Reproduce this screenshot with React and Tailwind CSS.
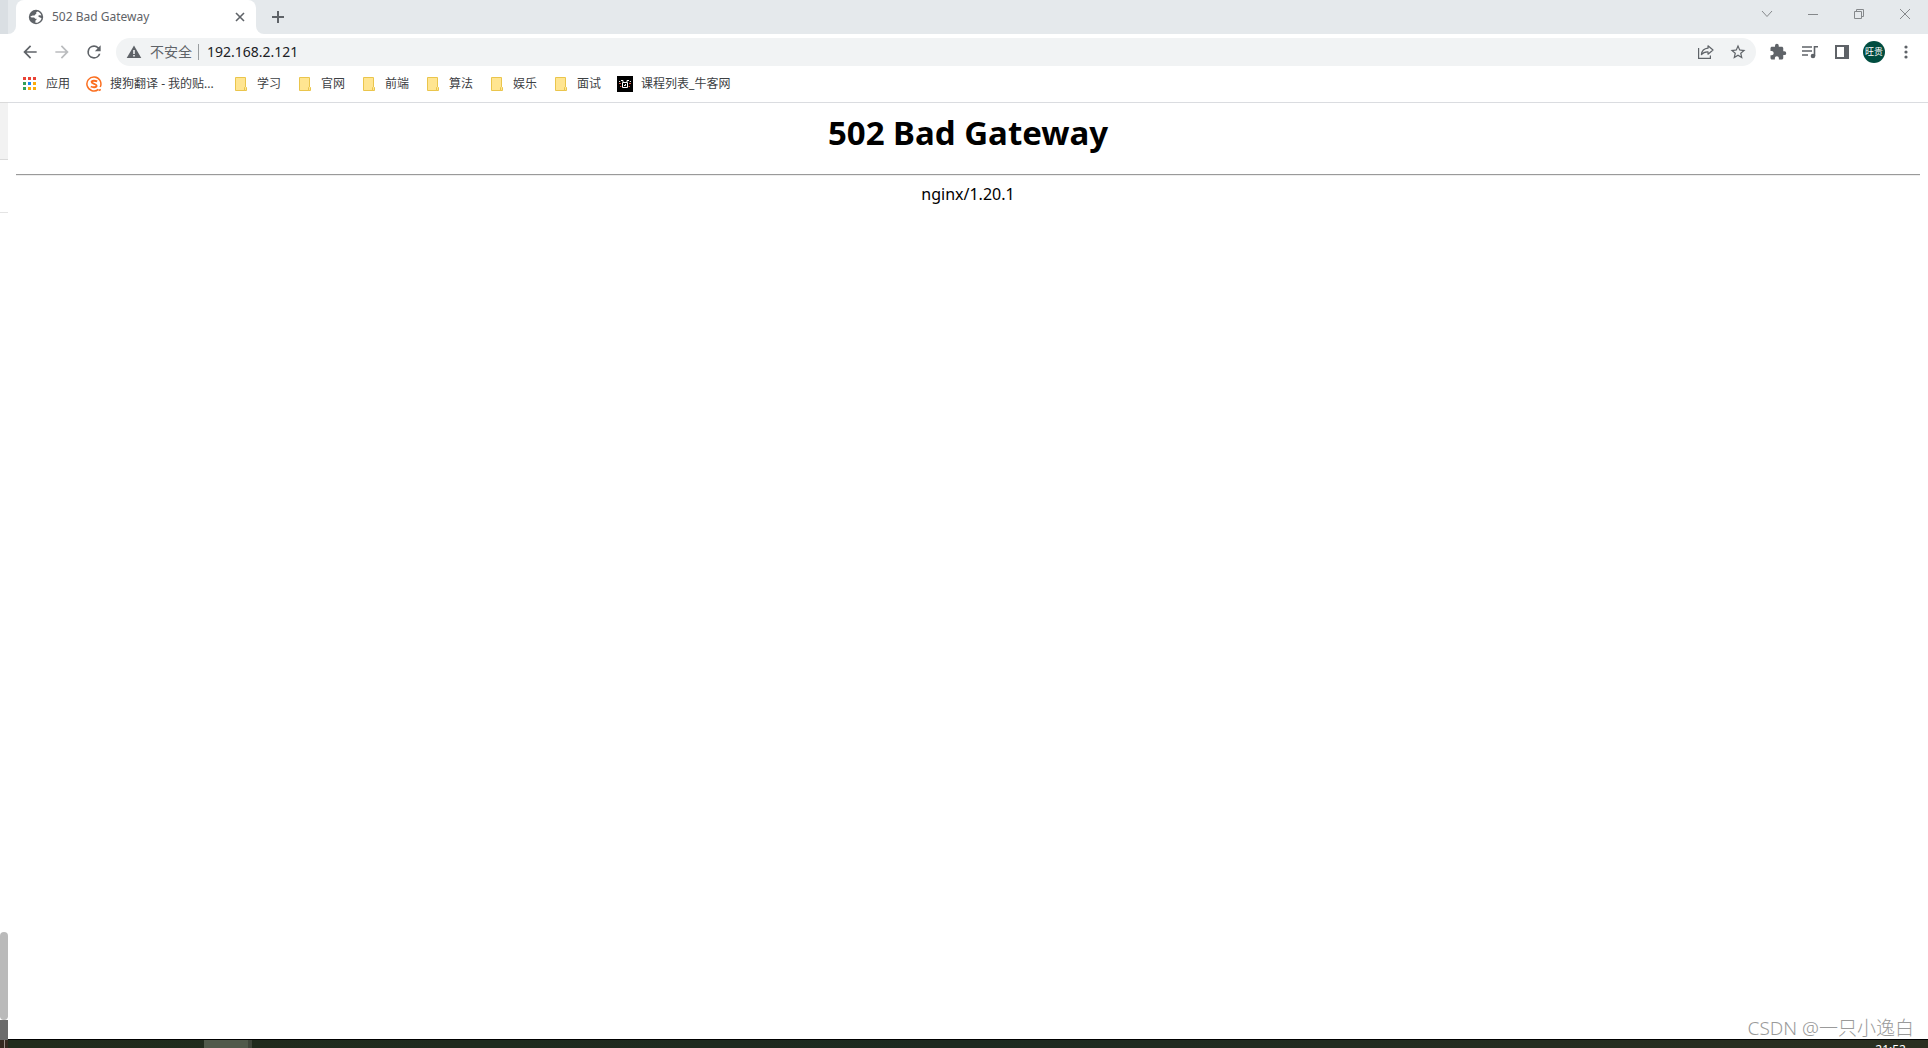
const bookmarks = [
  { label: "学习", icon: "folder" },
  { label: "官网", icon: "folder" },
  { label: "前端", icon: "folder" },
  { label: "算法", icon: "folder" },
  { label: "娱乐", icon: "folder" },
  { label: "面试", icon: "folder" },
  { label: "课程列表_牛客网", icon: "nowcoder" },
];

const GlobeIcon = () => (
  <svg viewBox="0 0 16 16" className="size-4 shrink-0" aria-hidden="true">
    <circle cx="8" cy="8" r="7.2" fill="#5f6368" />
    <path
      d="M9.5 2.4 C8 3 7.6 4.2 8.6 4.8 C7.6 5.2 6.8 5.6 6.6 6.6 H4.6 L2.4 7.4 C2.6 8.4 4 8.6 5.4 8.4 C6.4 8.4 7 9 7 9.8 H8.6 C8.6 11 8 11.4 7.4 11.6 V13.8 C10.4 13.8 12.4 12.4 13.6 9.4 C12.4 8.4 11.4 8.6 10.4 7.6 C10 6.8 10.8 6 11.8 6.2 L13.4 6.4 C12.8 4.4 11.4 3 9.5 2.4 Z"
      fill="#fff"
    />
  </svg>
);

const CloseIcon = () => (
  <svg viewBox="0 0 16 16" className="size-4" stroke="#5f6368" strokeWidth="1.6">
    <path d="M4 4 L12 12 M12 4 L4 12" />
  </svg>
);

const PlusIcon = () => (
  <svg viewBox="0 0 16 16" className="size-4" stroke="#5f6368" strokeWidth="2">
    <path d="M8 2 V14 M2 8 H14" />
  </svg>
);

const BackIcon = () => (
  <svg viewBox="0 0 24 24" className="size-5" fill="#5f6368">
    <path d="M20 11H7.83l5.59-5.59L12 4l-8 8 8 8 1.41-1.41L7.83 13H20v-2z" />
  </svg>
);

const ForwardIcon = () => (
  <svg viewBox="0 0 24 24" className="size-5" fill="#babcbe">
    <path d="M12 4l-1.41 1.41L16.17 11H4v2h12.17l-5.58 5.59L12 20l8-8z" />
  </svg>
);

const ReloadIcon = () => (
  <svg viewBox="0 0 24 24" className="size-5" fill="#5f6368">
    <path d="M17.65 6.35A7.96 7.96 0 0 0 12 4a8 8 0 1 0 7.73 10h-2.08A6 6 0 1 1 12 6c1.66 0 3.14.69 4.22 1.78L13 11h7V4l-2.35 2.35z" />
  </svg>
);

const WarningIcon = () => (
  <svg viewBox="0 0 16 16" className="size-4" aria-hidden="true">
    <path d="M8 1.5 L15.3 14 H0.7 Z" fill="#5f6368" />
    <path d="M7.2 6 H8.8 V10 H7.2 Z M7.2 11 H8.8 V12.5 H7.2 Z" fill="#f1f3f4" />
  </svg>
);

const ShareIcon = () => (
  <svg viewBox="0 0 16 16" className="size-4" fill="none" stroke="#5f6368" strokeWidth="1.2">
    <path d="M0.6 4 V14.4 H12.4 V11.6" />
    <path
      d="M10 1.8 L15 6 L10 10.2 V7.8 C7 7.6 5 8.6 3.4 10.6 C3.8 7 6 4.6 10 4.2 Z"
      strokeLinejoin="round"
    />
  </svg>
);

const StarIcon = () => (
  <svg viewBox="0 0 24 24" className="size-[18px]" fill="#5f6368">
    <path d="M22 9.24l-7.19-.62L12 2 9.19 8.63 2 9.24l5.46 4.73L5.82 21 12 17.27 18.18 21l-1.63-7.03L22 9.24zM12 15.4l-3.76 2.27 1-4.28-3.32-2.88 4.38-.38L12 6.1l1.71 4.04 4.38.38-3.32 2.88 1 4.28L12 15.4z" />
  </svg>
);

const PuzzleIcon = () => (
  <svg viewBox="0 0 24 24" className="size-[18px]" fill="#5f6368">
    <path d="M20.5 11H19V7c0-1.1-.9-2-2-2h-4V3.5a2.5 2.5 0 0 0-5 0V5H4c-1.1 0-1.99.9-1.99 2v3.8H3.5c1.49 0 2.7 1.21 2.7 2.7s-1.21 2.7-2.7 2.7H2V20c0 1.1.9 2 2 2h3.8v-1.5c0-1.49 1.21-2.7 2.7-2.7s2.7 1.21 2.7 2.7V22H17c1.1 0 2-.9 2-2v-4h1.5a2.5 2.5 0 0 0 0-5z" />
  </svg>
);

const QueueIcon = () => (
  <svg viewBox="0 0 16 16" className="size-4" aria-hidden="true">
    <path d="M0 3 H10 M0 7 H10 M0 11 H6" stroke="#5f6368" strokeWidth="1.6" />
    <path d="M12.5 12 V2.8 H16" stroke="#5f6368" strokeWidth="1.6" fill="none" />
    <circle cx="11" cy="12" r="2.3" fill="#5f6368" />
  </svg>
);

const PanelIcon = () => (
  <svg viewBox="0 0 14 14" className="size-3.5" aria-hidden="true">
    <path d="M0 0 H14 V14 H0 Z M2 2 V12 H9 V2 Z" fill="#5f6368" fillRule="evenodd" />
  </svg>
);

const DotsIcon = () => (
  <svg viewBox="0 0 16 16" className="size-4" fill="#5f6368">
    <circle cx="8" cy="3" r="1.6" />
    <circle cx="8" cy="8" r="1.6" />
    <circle cx="8" cy="13" r="1.6" />
  </svg>
);

const FolderIcon = () => (
  <svg viewBox="0 0 16 16" className="size-4 shrink-0" aria-hidden="true">
    <path d="M2.5 1.5 H12.5 V14.5 H2.5 Z" fill="#ffe591" stroke="#eac54c" />
    <path d="M11.5 14.5 V11.5 L12.5 10.5 L13.5 11.5 V14.5 Z" fill="#ffe591" stroke="#eac54c" />
  </svg>
);

const NowcoderIcon = () => (
  <svg viewBox="0 0 16 16" className="size-4 shrink-0" aria-hidden="true">
    <path d="M0 0 H16 V16 H0 Z" fill="#000" />
    <path d="M5.5 6.5 H10.5 V11.5 H5.5 Z M7 9.5 H8.5 V8 M4 4.5 H6 V6 M12 4.5 H10 V6" fill="none" stroke="#fff" />
    <path d="M2 5.5 H3.2 M12.8 5.5 H14" stroke="#ddd" />
    <path d="M2 7.5 H4 M3 10.5 H4.4 M12 7.5 H14 M11.6 10.5 H13" stroke="#e0604a" />
  </svg>
);

const SogouIcon = () => (
  <svg viewBox="0 0 16 16" className="size-4 shrink-0" fill="none" stroke="#fb6f20" aria-hidden="true">
    <path d="M12.4 13.3 A7 7 0 1 1 14.2 11" strokeWidth="1.5" />
    <path
      d="M11.2 5.4 C9.4 4.5 5.6 4.2 5.6 6.1 C5.6 8.2 10.6 7.5 10.6 9.7 C10.6 11.7 6.6 11.4 4.8 10.5"
      strokeWidth="1.9"
    />
    <path d="M12.6 14.4 L14.8 13.6" strokeWidth="1.6" />
  </svg>
);

const AppsIcon = () => (
  <svg viewBox="0 0 16 16" className="size-4 shrink-0" aria-hidden="true">
    <path d="M1 1 h3 v3 h-3z M6 1 h3 v3 h-3z M11 1 h3 v3 h-3z" fill="#ea4335" />
    <path d="M1 6 h3 v3 h-3z M1 11 h3 v3 h-3z" fill="#34a05a" />
    <path d="M6 6 h3 v3 h-3z" fill="#1a86f0" />
    <path d="M11 6 h3 v3 h-3z M6 11 h3 v3 h-3z M11 11 h3 v3 h-3z" fill="#fbab0a" />
  </svg>
);

const IconButton = ({ label, children }) => (
  <button aria-label={label} className="flex h-7 w-8 items-center justify-center">
    {children}
  </button>
);

const WindowButton = ({ label, d }) => (
  <button aria-label={label} className="flex h-7 w-[46px] items-end justify-center pb-2">
    <svg viewBox="0 0 12 12" className="size-3" fill="none" stroke="#85888b">
      <path d={d} />
    </svg>
  </button>
);

const TabStrip = () => (
  <div className="flex h-[34px] bg-[#e5e9ec]">
    <div className="w-2 bg-white">
      <div className="h-full rounded-br-lg bg-[#e5e9ec]" />
    </div>
    <div className="flex w-60 items-center rounded-t-lg bg-white pr-2 pl-3">
      <GlobeIcon />
      <span className="ml-2 flex-1 text-xs text-[#5f6368]">502 Bad Gateway</span>
      <button aria-label="关闭标签页">
        <CloseIcon />
      </button>
    </div>
    <div className="w-2 bg-white">
      <div className="h-full rounded-bl-lg bg-[#e5e9ec]" />
    </div>
    <button aria-label="新标签页" className="flex w-7 items-center justify-center">
      <PlusIcon />
    </button>
    <div className="ml-auto flex">
      <WindowButton label="搜索标签页" d="M1 3 L6 8.5 L11 3" />
      <WindowButton label="最小化" d="M1 6.5 H11" />
      <WindowButton label="还原" d="M1.5 3.5 H8.5 V10.5 H1.5 Z M3.5 3.5 V1.5 H10.5 V8.5 H8.5" />
      <WindowButton label="关闭" d="M1 1 L11 11 M11 1 L1 11" />
    </div>
  </div>
);

const Toolbar = () => (
  <div className="flex items-center gap-1.5 px-1.5 pt-1">
    <div className="flex">
      <IconButton label="后退">
        <BackIcon />
      </IconButton>
      <IconButton label="前进">
        <ForwardIcon />
      </IconButton>
      <IconButton label="重新加载">
        <ReloadIcon />
      </IconButton>
    </div>
    <div className="flex h-7 flex-1 items-center rounded-full bg-[#f1f3f4] pr-0.5 pl-2.5 text-sm">
      <WarningIcon />
      <label htmlFor="address" className="ml-2 text-[#5f6368]">
        不安全
      </label>
      <div className="mr-2 ml-1.5 h-4 w-px bg-[#9a9da0]" />
      <input
        id="address"
        defaultValue="192.168.2.121"
        className="min-w-0 flex-1 bg-transparent text-[#202124] outline-none"
      />
      <IconButton label="分享">
        <ShareIcon />
      </IconButton>
      <IconButton label="收藏">
        <StarIcon />
      </IconButton>
    </div>
    <div className="flex items-center">
      <IconButton label="扩展程序">
        <PuzzleIcon />
      </IconButton>
      <IconButton label="媒体控制">
        <QueueIcon />
      </IconButton>
      <IconButton label="侧边栏">
        <PanelIcon />
      </IconButton>
      <button className="mx-[5px] flex size-[22px] items-center justify-center rounded-full bg-[#004d40] text-[9px] whitespace-nowrap text-white">
        旺贵
      </button>
      <IconButton label="更多">
        <DotsIcon />
      </IconButton>
    </div>
  </div>
);

const BookmarkBar = () => (
  <nav className="flex h-[37px] items-center gap-4 border-b border-[#dadce0] pl-3.5 text-xs text-[#3c4043]">
    <a href="#apps" className="flex items-center gap-2">
      <AppsIcon />
      应用
    </a>
    <a href="#sogou" className="flex items-center gap-2">
      <SogouIcon />
      <span className="min-w-[107px]">搜狗翻译 - 我的贴...</span>
    </a>
    {bookmarks.map(({ label, icon }) => (
      <a key={label} href={`#${label}`} className="flex items-center gap-2">
        {icon === "folder" ? <FolderIcon /> : <NowcoderIcon />}
        {label}
      </a>
    ))}
  </nav>
);

const ErrorPage = () => (
  <main className="px-2 text-center text-black">
    <h1 className="py-2 text-[33px] leading-[44px] font-bold">502 Bad Gateway</h1>
    <hr className="mt-[11px] border-t border-b border-t-[#9a9a9a] border-b-[#eeeeee]" />
    <p className="pt-1.5 text-base">nginx/1.20.1</p>
  </main>
);

// sliver of the window that sits behind the browser
const BackWindow = () => (
  <aside className="flex w-2 flex-col bg-white">
    <div className="h-[34px] bg-[#dadfe3]" />
    <div className="h-[69px] border-b border-[#dadada]" />
    <div className="h-[57px] border-b border-[#dadada] bg-[#f2f2f2]" />
    <div className="h-[53px] border-b border-[#e4e4e4]" />
    <div className="mt-auto h-[88px] rounded-full bg-[#bababa]" />
    <div className="h-5 bg-[#6b6b6b]" />
  </aside>
);

const Taskbar = () => (
  <footer className="flex h-2 bg-linear-to-r from-[#212c1c] via-[#1d2a20] to-[#2a2f20]">
    <div className="flex w-2 justify-center bg-[#35291f]">
      <div className="w-px bg-[#9a8f88]" />
    </div>
    <div className="ml-[196px] w-11 bg-[#505a4b]" />
    <div className="w-1 bg-[#3e463a]" />
    <time className="mr-[22px] ml-auto h-2 overflow-hidden text-xs leading-5 text-white">21:52</time>
  </footer>
);

export default function App() {
  return (
    <div className="relative flex min-h-screen flex-col bg-white font-['Noto_Sans','Noto_Sans_CJK_SC',sans-serif]">
      <div className="flex flex-1">
        <BackWindow />
        <div className="flex-1 border-b border-black">
          <TabStrip />
          <Toolbar />
          <BookmarkBar />
          <ErrorPage />
        </div>
      </div>
      <Taskbar />
      <div className="absolute right-3.5 bottom-1.5 text-[19px] leading-7 font-light text-[#9a9a9a]">
        CSDN @一只小逸白
      </div>
    </div>
  );
}
